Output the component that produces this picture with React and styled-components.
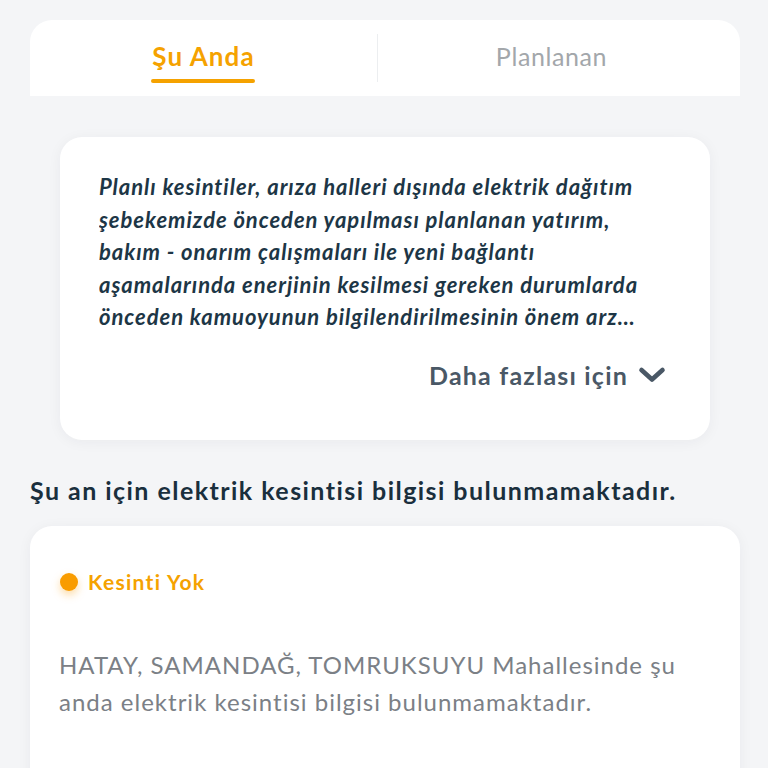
import React from "react";
import styled, { createGlobalStyle } from "styled-components";

const Global = createGlobalStyle`
  html, body { margin: 0; padding: 0; background: #f4f5f7; }
  body { font-family: Lato, "Noto Sans", sans-serif; -webkit-font-smoothing: antialiased; }
  * { box-sizing: border-box; }
`;

const Page = styled.div`
  display: flex;
  flex-direction: column;
  padding: 20px 28px 0 30px;
  min-height: 768px;
`;

const TabBar = styled.div`
  display: grid;
  grid-template-columns: 347px 1px 1fr;
  align-items: center;
  height: 76px;
  background: #fff;
  border-radius: 22px 22px 0 0;
`;

const Tab = styled.div`
  display: flex;
  justify-content: center;
  align-items: center;
  height: 100%;
  padding-right: ${p => p.$shift || 0}px;
`;

const TabLabel = styled.span`
  position: relative;
  font-size: ${p => (p.$active ? 26 : 25)}px;
  font-weight: ${p => (p.$active ? 700 : 400)};
  letter-spacing: ${p => (p.$active ? 1.1 : 0.6)}px;
  color: ${p => (p.$active ? "#f5a200" : "#a3a7ab")};
  margin-top: -4px;
  &::after {
    content: "";
    display: ${p => (p.$active ? "block" : "none")};
    position: absolute;
    left: -1px;
    right: 0;
    bottom: -11px;
    height: 4px;
    border-radius: 2px;
    background: #f5a200;
  }
`;

const Divider = styled.div`
  width: 1px;
  height: 48px;
  background: #eceef0;
`;

const InfoCard = styled.div`
  margin: 41px 30px 0 30px;
  background: #fff;
  border-radius: 22px;
  padding: 34px 36px 0 39px;
  height: 303px;
  box-shadow: 0 2px 14px rgba(30, 40, 60, 0.05);
  display: flex;
  flex-direction: column;
`;

const InfoText = styled.p`
  margin: 0;
  font-size: 22px;
  font-style: italic;
  font-weight: 700;
  line-height: 32.5px;
  color: #1d3646;
  letter-spacing: 0.95px;
  display: -webkit-box;
  -webkit-line-clamp: 5;
  -webkit-box-orient: vertical;
  overflow: hidden;
`;

const MoreRow = styled.div`
  display: flex;
  justify-content: flex-end;
  align-items: center;
  gap: 10px;
  margin-top: 26px;
  padding-right: 8px;
  font-size: 25px;
  letter-spacing: 1.2px;
  font-weight: 700;
  color: #4a5866;
`;

const Heading = styled.h2`
  margin: 34px 0 0 0;
  font-size: 25px;
  font-weight: 700;
  letter-spacing: 1.45px;
  color: #1a2f3d;
  line-height: 32px;
`;

const StatusCard = styled.div`
  margin-top: 20px;
  background: #fff;
  border-radius: 22px;
  padding: 43px 30px 40px 29px;
  height: 300px;
  box-shadow: 0 2px 14px rgba(30, 40, 60, 0.05);
`;

const StatusRow = styled.div`
  display: flex;
  align-items: center;
  gap: 10px;
  padding-left: 1px;
  font-size: 21px;
  letter-spacing: 1.3px;
  font-weight: 700;
  color: #f5a200;
`;

const Dot = styled.span`
  width: 18px;
  height: 18px;
  border-radius: 50%;
  background: #f99c00;
  box-shadow: 0 4px 8px rgba(249, 156, 0, 0.35);
`;

const StatusText = styled.p`
  margin: 52px 0 0 0;
  font-size: 24px;
  line-height: 37px;
  letter-spacing: 1px;
  font-weight: 400;
  color: #7b8086;
`;

const Chevron = () => (
  <svg width="28" height="18" viewBox="0 0 28 18" fill="none">
    <path d="M3.5 4 L14 13.5 L24.5 4" stroke="#4a5866" strokeWidth="4.6" strokeLinecap="round" strokeLinejoin="round" />
  </svg>
);

export default function App() {
  return (
    <>
      <Global />
      <Page>
        <TabBar>
          <Tab><TabLabel $active>Şu Anda</TabLabel></Tab>
          <Divider />
          <Tab $shift={15}><TabLabel>Planlanan</TabLabel></Tab>
        </TabBar>
        <InfoCard>
          <InfoText>
            Planlı kesintiler, arıza halleri dışında elektrik dağıtım şebekemizde önceden yapılması planlanan yatırım, bakım - onarım çalışmaları ile yeni bağlantı aşamalarında enerjinin kesilmesi gereken durumlarda önceden kamuoyunun bilgilendirilmesinin önem arz etmesi nedeniyle, planlı kesinti bilgileri önceden duyurulmaktadır.
          </InfoText>
          <MoreRow>
            Daha fazlası için <Chevron />
          </MoreRow>
        </InfoCard>
        <Heading>Şu an için elektrik kesintisi bilgisi bulunmamaktadır.</Heading>
        <StatusCard>
          <StatusRow><Dot />Kesinti Yok</StatusRow>
          <StatusText>
            HATAY, SAMANDAĞ, TOMRUKSUYU Mahallesinde şu anda elektrik kesintisi bilgisi bulunmamaktadır.
          </StatusText>
        </StatusCard>
      </Page>
    </>
  );
}
